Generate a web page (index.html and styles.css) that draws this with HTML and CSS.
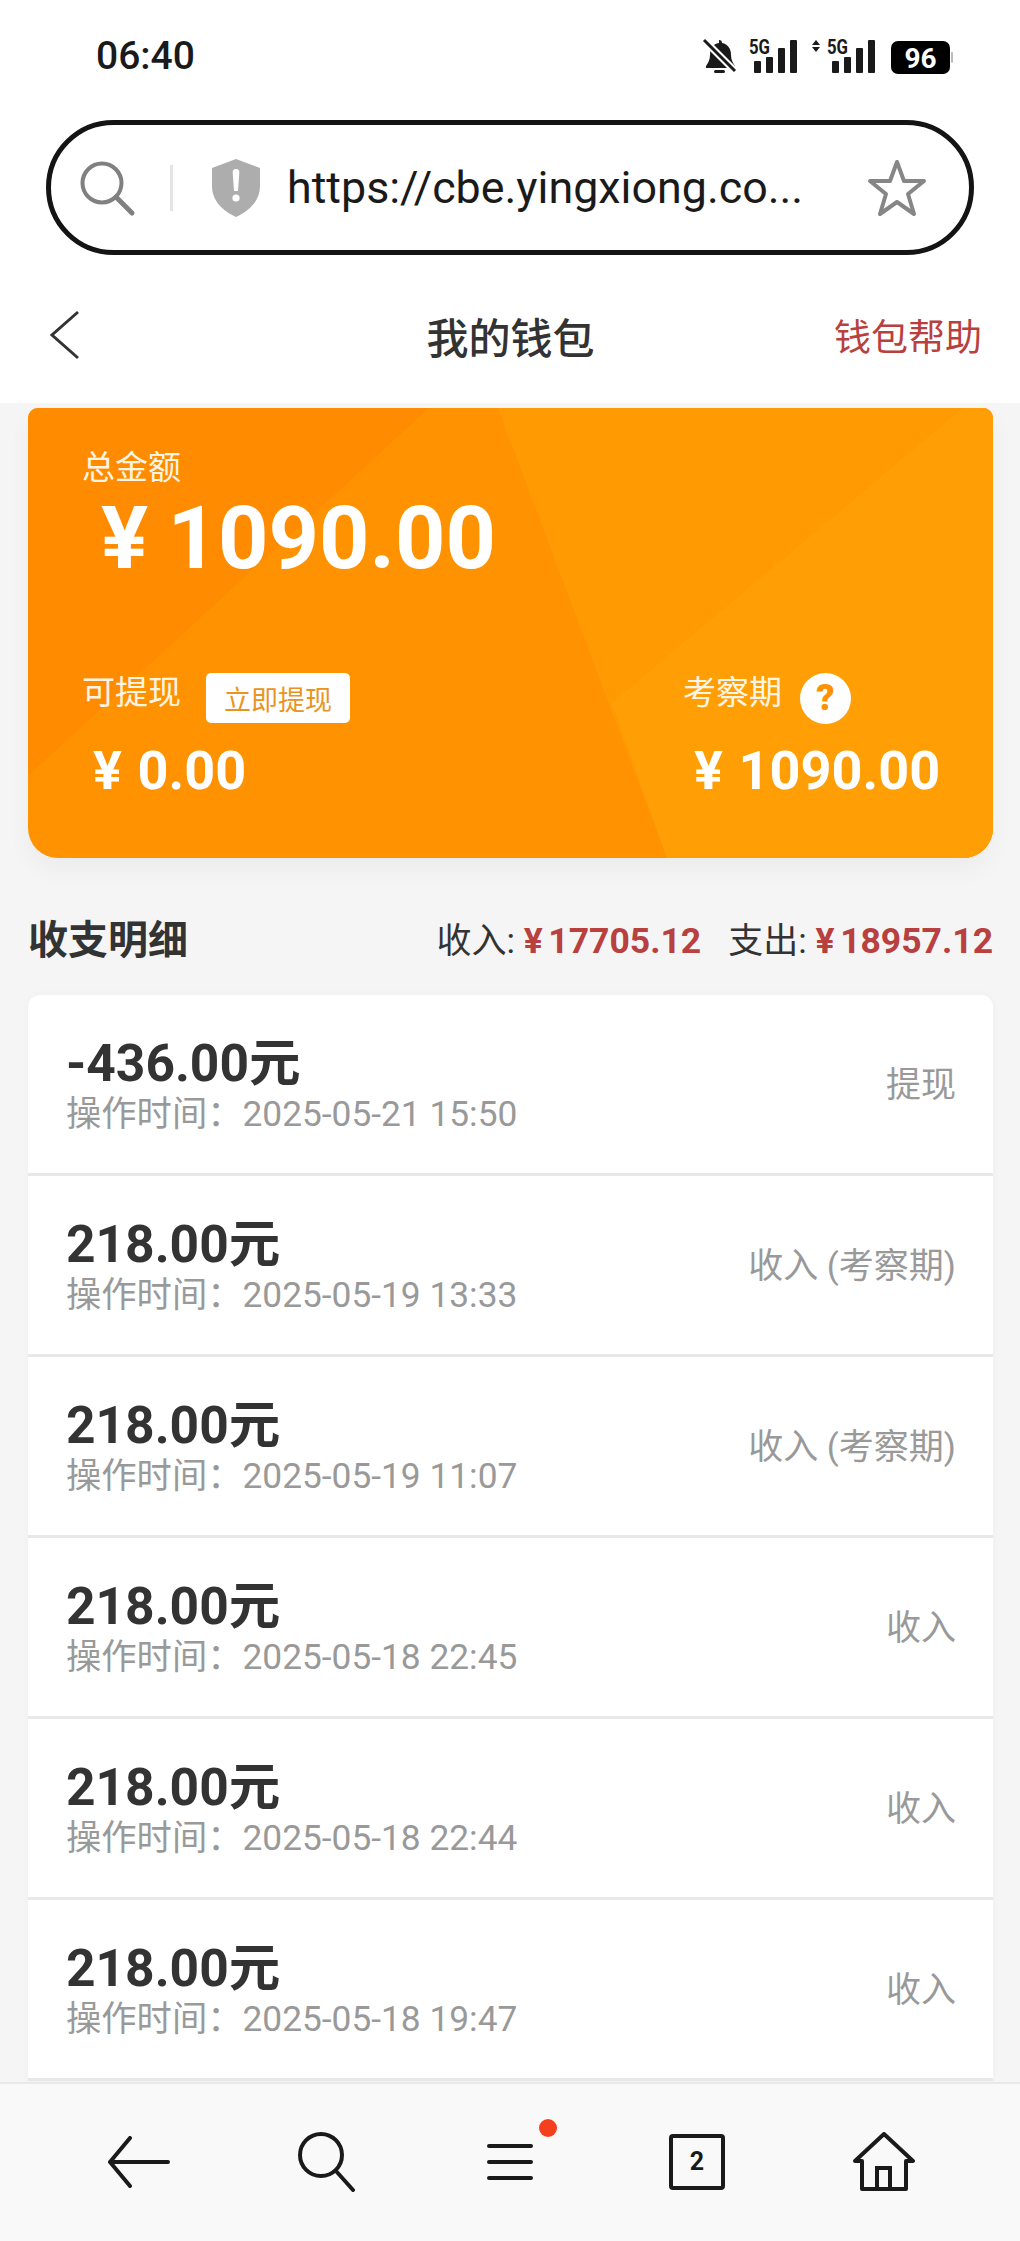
FILE: index.html
```html
<!DOCTYPE html>
<html lang="zh-CN">
<head>
  <meta charset="UTF-8" />
  <title>我的钱包</title>
  <link rel="stylesheet" href="styles.css">
</head>
<body>

  <header class="top">
    <div class="status">
      <span class="time">06:40</span>
      <svg class="status-icons" width="256" height="42" viewBox="700 36 256 42">
        <path d="M719 41a3 3 0 0 1 3 3c6 1 9 6 9 12 0 5 2 8 4 11v2h-29v-2c2-3 4-6 4-11 0-7 3-11 9-12Z" fill="#1a1a1a"/>
        <rect x="714" y="71" width="11" height="3" rx="1.5" fill="#1a1a1a"/>
        <path d="M703 40 736 73" stroke="#fff" stroke-width="7"/>
        <path d="M704 41 735 72" stroke="#1a1a1a" stroke-width="3"/>
        <text x="749" y="55" class="net" textLength="21" lengthAdjust="spacingAndGlyphs">5G</text>
        <rect x="754" y="62" width="7" height="12" rx="1" fill="#1a1a1a"/>
        <rect x="766" y="58" width="7" height="16" rx="1" fill="#1a1a1a"/>
        <rect x="778" y="49" width="7" height="25" rx="1" fill="#1a1a1a"/>
        <rect x="790" y="41" width="7" height="33" rx="1" fill="#1a1a1a"/>
        <path d="M816 41 820 46H812ZM816 53 820 48H812Z" fill="#1a1a1a"/>
        <text x="827" y="55" class="net" textLength="21" lengthAdjust="spacingAndGlyphs">5G</text>
        <rect x="832" y="62" width="7" height="12" rx="1" fill="#1a1a1a"/>
        <rect x="844" y="58" width="7" height="16" rx="1" fill="#1a1a1a"/>
        <rect x="856" y="49" width="7" height="25" rx="1" fill="#1a1a1a"/>
        <rect x="868" y="41" width="7" height="33" rx="1" fill="#1a1a1a"/>
        <rect x="891" y="42" width="59" height="33" rx="7" fill="#000"/>
        <rect x="951" y="53" width="2" height="11" rx="1" fill="#bbb"/>
        <text x="920.5" y="69" text-anchor="middle" class="batt">96</text>
      </svg>
    </div>

    <div class="urlbar">
      <svg class="url-search" width="58" height="58" viewBox="0 0 58 58">
        <circle cx="24" cy="24" r="19.5" fill="none" stroke="#808080" stroke-width="4"/>
        <path d="M38 38 54 54" stroke="#808080" stroke-width="5" stroke-linecap="round"/>
      </svg>
      <span class="url-sep"></span>
      <svg class="url-shield" width="50" height="58" viewBox="0 0 50 58">
        <path d="M25 0 49 9V27C49 42 38 52 25 58 12 52 1 42 1 27V9Z" fill="#adadad"/>
        <path d="M25 10c2.500 0 3.500 1.500 3.300 4L27 32h-4l-1.300-18c-.2-2.500.8-4 3.300-4Z" fill="#fff"/>
        <circle cx="25" cy="39" r="3.600" fill="#fff"/>
      </svg>
      <span class="url-text">https://cbe.yingxiong.co...</span>
      <svg class="url-star" width="60" height="58" viewBox="0 0 60 58">
        <path d="M30 3 37 22 57 22 41 35 47 55 30 43 13 55 19 35 3 22 23 22Z" fill="none" stroke="#868686" stroke-width="4" stroke-linejoin="round"/>
      </svg>
    </div>

    <nav class="navbar">
      <svg width="30" height="50" viewBox="0 0 30 50">
        <path d="M28 2 2 25 28 48" fill="none" stroke="#333" stroke-width="3"/>
      </svg>
      <h1>我的钱包</h1>
      <a class="help">钱包帮助</a>
    </nav>
  </header>

  <main>
    <section class="wallet">
      <svg class="wallet-bg" viewBox="0 0 965 450" preserveAspectRatio="none">
        <rect width="965" height="450" fill="#ff9200"/>
        <path d="M0 0H401L0 368Z" fill="#ff8c00"/>
        <path d="M470 0H965V450H639Z" fill="#ff9a03"/>
        <path d="M935 0H965V450H639L584 295Z" fill="#ff9f05"/>
      </svg>
      <p class="wallet-label">总金额</p>
      <p class="wallet-total"><span class="yen">¥</span>1090.00</p>
      <div class="wallet-row">
        <div>
          <div class="wallet-head">
            <span class="wallet-label">可提现</span>
            <button class="withdraw">立即提现</button>
          </div>
          <p class="wallet-value left"><span class="yen">¥</span>0.00</p>
        </div>
        <div class="wallet-right">
          <div class="wallet-head">
            <span class="wallet-label">考察期</span>
            <span class="hint">?</span>
          </div>
          <p class="wallet-value"><span class="yen">¥</span>1090.00</p>
        </div>
      </div>
    </section>

    <div class="summary">
      <h2>收支明细</h2>
      <p>收入: <b><span class="yen">¥</span>17705.12</b><span class="spent">支出:</span> <b><span class="yen">¥</span>18957.12</b></p>
    </div>

    <ul class="records">
      <li>
        <div class="record-main"><p class="amount">-436.00元</p><p class="when">操作时间：2025-05-21 15:50</p></div>
        <span class="kind">提现</span>
      </li>
      <li>
        <div class="record-main"><p class="amount">218.00元</p><p class="when">操作时间：2025-05-19 13:33</p></div>
        <span class="kind">收入 (考察期)</span>
      </li>
      <li>
        <div class="record-main"><p class="amount">218.00元</p><p class="when">操作时间：2025-05-19 11:07</p></div>
        <span class="kind">收入 (考察期)</span>
      </li>
      <li>
        <div class="record-main"><p class="amount">218.00元</p><p class="when">操作时间：2025-05-18 22:45</p></div>
        <span class="kind">收入</span>
      </li>
      <li>
        <div class="record-main"><p class="amount">218.00元</p><p class="when">操作时间：2025-05-18 22:44</p></div>
        <span class="kind">收入</span>
      </li>
      <li>
        <div class="record-main"><p class="amount">218.00元</p><p class="when">操作时间：2025-05-18 19:47</p></div>
        <span class="kind">收入</span>
      </li>
    </ul>
  </main>

  <footer class="toolbar">
    <svg class="tool-back" width="62" height="52" viewBox="0 0 62 52">
      <path d="M22 2 2 26 22 50M2 26H60" fill="none" stroke="#1a1a1a" stroke-width="4" stroke-linecap="round" stroke-linejoin="round"/>
    </svg>
    <svg class="tool-search" width="60" height="60" viewBox="0 0 60 60">
      <circle cx="25" cy="23" r="21" fill="none" stroke="#1a1a1a" stroke-width="4"/>
      <path d="M40 39 57 58" stroke="#1a1a1a" stroke-width="4" stroke-linecap="round"/>
    </svg>
    <div class="menu">
      <svg width="46" height="38" viewBox="0 0 46 38">
        <path d="M2 3H44M2 19H44M2 35H44" stroke="#1a1a1a" stroke-width="4" stroke-linecap="round"/>
      </svg>
      <span class="dot"></span>
    </div>
    <span class="tabs">2</span>
    <svg width="62" height="60" viewBox="0 0 62 60">
      <path d="M2 29 31 2 60 29 53 29V57H9V29Z" fill="none" stroke="#1a1a1a" stroke-width="4" stroke-linejoin="round"/>
      <path d="M24 57V36H37V57" fill="none" stroke="#1a1a1a" stroke-width="4"/>
    </svg>
  </footer>

</body>
</html>
```

FILE: styles.css
```css
/* Reset */
* {
  margin: 0;
  padding: 0;
  box-sizing: border-box;
}

body {
  width: 1020px;
  height: 2241px;
  overflow: hidden;
  display: flex;
  flex-direction: column;
  background: #f5f5f5;
  color: #333;
  font-family: Roboto, "Noto Sans CJK SC", sans-serif;
}

/* Top area: status bar, address bar, title */
.top {
  height: 403px;
  background: #fff;
}

.status {
  height: 112px;
  padding: 0 64px 0 96px;
  display: flex;
  justify-content: space-between;
  align-items: center;
}

.time {
  font-size: 39px;
  font-weight: 500;
  color: #1a1a1a;
}

.net {
  font: 700 20px Roboto, sans-serif;
  fill: #1a1a1a;
}

.batt {
  font: 700 28px Roboto, sans-serif;
  fill: #fff;
}

.urlbar {
  height: 135px;
  margin: 8px 46px 0;
  padding: 0 42px 0 27px;
  display: flex;
  align-items: center;
  border: 5px solid #141414;
  border-radius: 68px;
}

.url-sep {
  width: 3px;
  height: 46px;
  margin: 0 38px 0 34px;
  background: #e4e4e4;
}

.url-text {
  flex: 1;
  margin-left: 26px;
  font-size: 44.8px;
  color: #1a1a1a;
}

.navbar {
  height: 148px;
  padding: 12px 38px 0 50px;
  display: grid;
  grid-template-columns: 1fr auto 1fr;
  align-items: center;
}

.navbar h1 {
  margin-right: 11px;
  font-size: 42px;
  font-weight: 500;
  color: #333;
}

.help {
  justify-self: end;
  font-size: 37px;
  color: #b8403f;
}

main {
  flex: 1;
  overflow: hidden;
  padding: 5px 27px 0 28px;
}

.wallet {
  position: relative;
  height: 450px;
  padding: 40px 0 0 54px;
  border-radius: 10px 10px 30px 30px;
  overflow: hidden;
  color: #fff;
  box-shadow: 0 12px 24px rgba(0,0,0,0.04);
}

.wallet-bg {
  position: absolute;
  top: 0;
  left: 0;
  width: 100%;
  height: 100%;
}

.wallet > p,
.wallet-row {
  position: relative;
}

.wallet-label {
  font-size: 33px;
  line-height: 40px;
  color: #fff5e4;
}

.wallet-total {
  margin: 5px 0 0 19px;
  font-size: 88px;
  line-height: 90px;
  font-weight: 700;
}

.yen {
  margin-right: 0.16em;
}

.wallet-total .yen {
  margin-right: 0.22em;
}

.wallet-row {
  margin-top: 90px;
  display: flex;
  justify-content: space-between;
}

.wallet-right {
  width: 310px;
}

.wallet-head {
  height: 50px;
  display: flex;
  align-items: center;
  gap: 25px;
}

.wallet-head .wallet-label {
  margin-bottom: 11px;
}

.withdraw {
  width: 144px;
  height: 50px;
  border: 0;
  border-radius: 5px;
  background: #fff;
  color: #ea9322;
  font-family: inherit;
  font-size: 27px;
}

.hint {
  width: 51px;
  height: 51px;
  margin-left: -7px;
  border-radius: 50%;
  background: #fff;
  color: #ff9200;
  font-size: 36px;
  font-weight: 900;
  line-height: 51px;
  text-align: center;
}

.wallet-value {
  margin: 18px 0 0 11px;
  font-size: 54px;
  line-height: 60px;
  font-weight: 700;
}

.wallet-value .yen {
  margin-right: 0.29em;
}

/* Income and expense totals */
.summary {
  height: 60px;
  margin: 49px 0 28px;
  display: flex;
  justify-content: space-between;
  align-items: center;
}

.summary h2 {
  font-size: 40px;
  font-weight: 700;
}

.summary p {
  font-size: 35px;
}

.summary b {
  font-size: 35.5px;
  color: #b8403f;
}

.spent {
  margin-left: 27px;
}

/* Records */
.records {
  list-style: none;
  border-radius: 12px 12px 0 0;
  overflow: hidden;
  box-shadow: 0 0 8px rgba(0,0,0,0.03);
}

.records li {
  height: 181px;
  padding: 0 37px 0 38px;
  display: flex;
  justify-content: space-between;
  align-items: center;
  background: #fff;
  border-bottom: 3px solid #e8e8e8;
}

.record-main {
  margin-top: 10px;
}

.amount {
  font-size: 51.5px;
  line-height: 50px;
  font-weight: 700;
}

.when {
  font-size: 35.3px;
  line-height: 50px;
  color: #999;
}

.kind {
  margin-bottom: 6px;
  font-size: 35px;
  color: #999;
}

/* Browser toolbar */
.toolbar {
  height: 159px;
  padding-bottom: 2px;
  display: grid;
  grid-template-columns: repeat(5, 187px);
  justify-content: center;
  justify-items: center;
  align-items: center;
  background: #f9f9f9;
  border-top: 2px solid #e9e9e9;
}

.tool-back,
.tool-search {
  margin-left: 6px;
}

.menu {
  position: relative;
  display: flex;
}

.dot {
  position: absolute;
  top: -24px;
  right: -24px;
  width: 18px;
  height: 18px;
  border-radius: 50%;
  background: #f4401f;
}

.tabs {
  width: 56px;
  height: 56px;
  display: flex;
  justify-content: center;
  align-items: center;
  border: 4px solid #1a1a1a;
  border-radius: 4px;
  color: #1a1a1a;
  font-size: 25px;
  font-weight: 700;
}
```
